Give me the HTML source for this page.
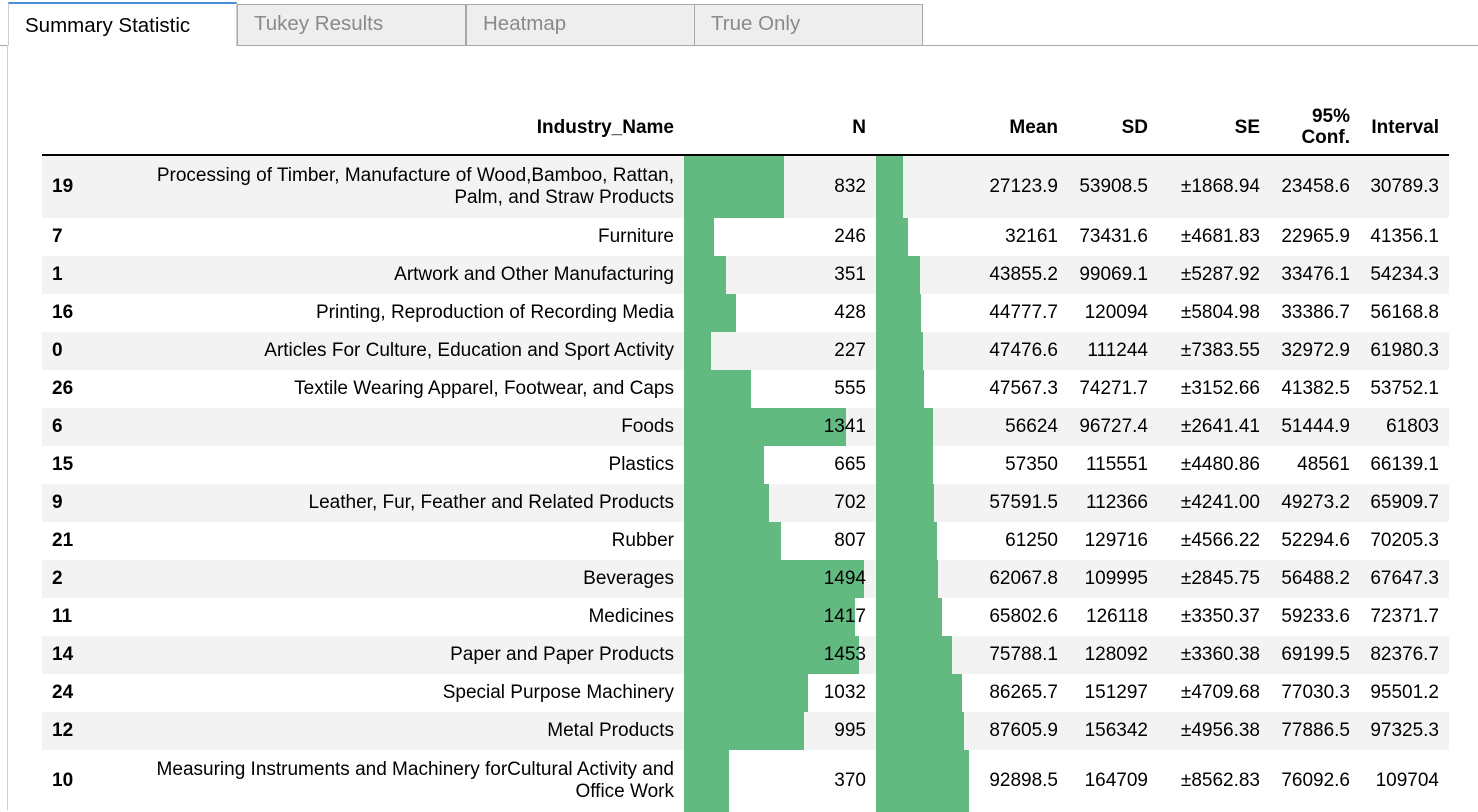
<!DOCTYPE html>
<html><head><meta charset="utf-8"><style>
body{margin:0;background:#fff;font-family:"Liberation Sans",Arial,sans-serif;width:1478px;height:810px;overflow:hidden;position:relative}
.tabs{position:absolute;left:0;top:0;width:1478px;height:45px;border-bottom:1px solid #a8a8a8}
.tab{position:absolute;top:4px;height:41px;border:1px solid #a8a8a8;border-bottom:none;background:#eee;color:#8a8a8a;font-size:20.5px;line-height:38px;padding-left:16px;box-sizing:border-box}
.tab.a{background:#fff;color:#000;border-top:2px solid #4a90d9;border-color:#d0d0d0;border-top-color:#4a90d9;height:44px;z-index:2;line-height:44px}
.panel{position:absolute;left:7px;top:45px;width:1px;height:765px;background:#d0d0d0}
table{position:absolute;left:42px;top:100px;border-collapse:collapse;font-size:19px;width:1407px;table-layout:fixed}
th{font-weight:bold;text-align:right;padding:0 10px;height:54px;vertical-align:middle;line-height:21px;border-bottom:2px solid #000}
td{text-align:right;padding:0 10px;height:38px;line-height:22px}
td:first-child{text-align:left;font-weight:bold}
tr:nth-child(odd) td{background-color:#f3f3f3}
tr.t td{height:62px}
</style></head><body>
<div class="tabs">
<div class="tab a" style="left:8px;width:229px;top:2px">Summary Statistic</div>
<div class="tab" style="left:237px;width:229px">Tukey Results</div>
<div class="tab" style="left:466px;width:229px">Heatmap</div>
<div class="tab" style="left:694px;width:229px">True Only</div>
</div>
<div class="panel"></div>
<table>
<colgroup><col style="width:58px"><col style="width:584px"><col style="width:192px"><col style="width:192px"><col style="width:90px"><col style="width:112px"><col style="width:90px"><col style="width:89px"></colgroup>
<thead><tr><th></th><th>Industry_Name</th><th>N</th><th>Mean</th><th>SD</th><th>SE</th><th>95%<br>Conf.</th><th>Interval</th></tr></thead>
<tbody>
<tr class="t"><td>19</td><td>Processing of Timber, Manufacture of Wood,Bamboo, Rattan,<br>Palm, and Straw Products</td><td style="background:linear-gradient(90deg,#63ba80 100px,#f3f3f3 100px)">832</td><td style="background:linear-gradient(90deg,#63ba80 27px,#f3f3f3 27px)">27123.9</td><td>53908.5</td><td>±1868.94</td><td>23458.6</td><td>30789.3</td></tr>
<tr><td>7</td><td>Furniture</td><td style="background:linear-gradient(90deg,#63ba80 30px,#fff 30px)">246</td><td style="background:linear-gradient(90deg,#63ba80 32px,#fff 32px)">32161</td><td>73431.6</td><td>±4681.83</td><td>22965.9</td><td>41356.1</td></tr>
<tr><td>1</td><td>Artwork and Other Manufacturing</td><td style="background:linear-gradient(90deg,#63ba80 42px,#f3f3f3 42px)">351</td><td style="background:linear-gradient(90deg,#63ba80 44px,#f3f3f3 44px)">43855.2</td><td>99069.1</td><td>±5287.92</td><td>33476.1</td><td>54234.3</td></tr>
<tr><td>16</td><td>Printing, Reproduction of Recording Media</td><td style="background:linear-gradient(90deg,#63ba80 52px,#fff 52px)">428</td><td style="background:linear-gradient(90deg,#63ba80 45px,#fff 45px)">44777.7</td><td>120094</td><td>±5804.98</td><td>33386.7</td><td>56168.8</td></tr>
<tr><td>0</td><td>Articles For Culture, Education and Sport Activity</td><td style="background:linear-gradient(90deg,#63ba80 27px,#f3f3f3 27px)">227</td><td style="background:linear-gradient(90deg,#63ba80 47px,#f3f3f3 47px)">47476.6</td><td>111244</td><td>±7383.55</td><td>32972.9</td><td>61980.3</td></tr>
<tr><td>26</td><td>Textile Wearing Apparel, Footwear, and Caps</td><td style="background:linear-gradient(90deg,#63ba80 67px,#fff 67px)">555</td><td style="background:linear-gradient(90deg,#63ba80 48px,#fff 48px)">47567.3</td><td>74271.7</td><td>±3152.66</td><td>41382.5</td><td>53752.1</td></tr>
<tr><td>6</td><td>Foods</td><td style="background:linear-gradient(90deg,#63ba80 162px,#f3f3f3 162px)">1341</td><td style="background:linear-gradient(90deg,#63ba80 57px,#f3f3f3 57px)">56624</td><td>96727.4</td><td>±2641.41</td><td>51444.9</td><td>61803</td></tr>
<tr><td>15</td><td>Plastics</td><td style="background:linear-gradient(90deg,#63ba80 80px,#fff 80px)">665</td><td style="background:linear-gradient(90deg,#63ba80 57px,#fff 57px)">57350</td><td>115551</td><td>±4480.86</td><td>48561</td><td>66139.1</td></tr>
<tr><td>9</td><td>Leather, Fur, Feather and Related Products</td><td style="background:linear-gradient(90deg,#63ba80 85px,#f3f3f3 85px)">702</td><td style="background:linear-gradient(90deg,#63ba80 58px,#f3f3f3 58px)">57591.5</td><td>112366</td><td>±4241.00</td><td>49273.2</td><td>65909.7</td></tr>
<tr><td>21</td><td>Rubber</td><td style="background:linear-gradient(90deg,#63ba80 97px,#fff 97px)">807</td><td style="background:linear-gradient(90deg,#63ba80 61px,#fff 61px)">61250</td><td>129716</td><td>±4566.22</td><td>52294.6</td><td>70205.3</td></tr>
<tr><td>2</td><td>Beverages</td><td style="background:linear-gradient(90deg,#63ba80 180px,#f3f3f3 180px)">1494</td><td style="background:linear-gradient(90deg,#63ba80 62px,#f3f3f3 62px)">62067.8</td><td>109995</td><td>±2845.75</td><td>56488.2</td><td>67647.3</td></tr>
<tr><td>11</td><td>Medicines</td><td style="background:linear-gradient(90deg,#63ba80 171px,#fff 171px)">1417</td><td style="background:linear-gradient(90deg,#63ba80 66px,#fff 66px)">65802.6</td><td>126118</td><td>±3350.37</td><td>59233.6</td><td>72371.7</td></tr>
<tr><td>14</td><td>Paper and Paper Products</td><td style="background:linear-gradient(90deg,#63ba80 175px,#f3f3f3 175px)">1453</td><td style="background:linear-gradient(90deg,#63ba80 76px,#f3f3f3 76px)">75788.1</td><td>128092</td><td>±3360.38</td><td>69199.5</td><td>82376.7</td></tr>
<tr><td>24</td><td>Special Purpose Machinery</td><td style="background:linear-gradient(90deg,#63ba80 124px,#fff 124px)">1032</td><td style="background:linear-gradient(90deg,#63ba80 86px,#fff 86px)">86265.7</td><td>151297</td><td>±4709.68</td><td>77030.3</td><td>95501.2</td></tr>
<tr><td>12</td><td>Metal Products</td><td style="background:linear-gradient(90deg,#63ba80 120px,#f3f3f3 120px)">995</td><td style="background:linear-gradient(90deg,#63ba80 88px,#f3f3f3 88px)">87605.9</td><td>156342</td><td>±4956.38</td><td>77886.5</td><td>97325.3</td></tr>
<tr class="t"><td>10</td><td>Measuring Instruments and Machinery forCultural Activity and<br>Office Work</td><td style="background:linear-gradient(90deg,#63ba80 45px,#fff 45px)">370</td><td style="background:linear-gradient(90deg,#63ba80 93px,#fff 93px)">92898.5</td><td>164709</td><td>±8562.83</td><td>76092.6</td><td>109704</td></tr>
</tbody></table>
</body></html>
